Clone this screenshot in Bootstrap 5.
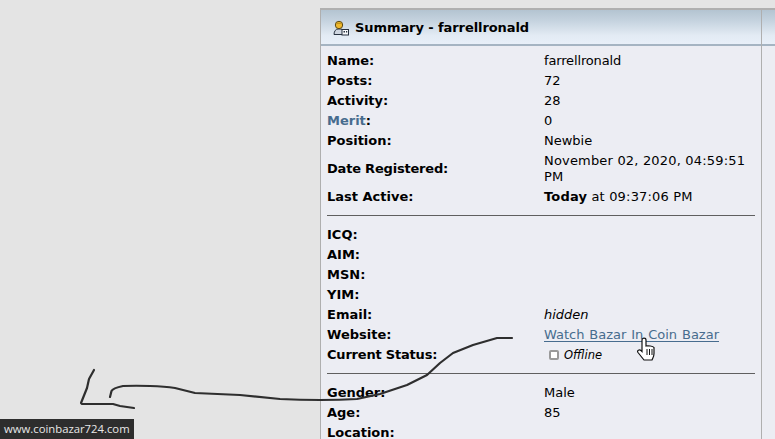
<!DOCTYPE html>
<html lang="en">
<head>
<meta charset="utf-8">
<title>Summary</title>
<link href="https://cdn.jsdelivr.net/npm/bootstrap@5.3.0/dist/css/bootstrap.min.css" rel="stylesheet">
<style>
html,body{height:439px;overflow:hidden}
body{background:#e4e4e4;font-family:"DejaVu Sans",Verdana,sans-serif;font-size:13px;line-height:16px;color:#000;position:relative}
.page-wrap{padding:8px 0 0 320px}
.pane{border-top:2px solid #afafaf;border-left:1px solid #afafaf;background:#ecedf3;height:431px}
.pane-main{width:441px;border-right:1px solid #afafaf;flex:none}
.pane-side{flex:1 1 auto}
.cap{height:34px;background:linear-gradient(#b4c4d1 0%,#c4d2de 30%,#e3ebf4 75%,#e8eff8 100%);border-bottom:2px solid #a5b4c2;box-sizing:content-box}
.cap-title{font-weight:700;padding:1px 0 0 12px;height:34px;letter-spacing:-.08px}
.cap-title svg{margin-right:6px}
.info{padding:5px 6px 0 6px}
.rw{min-height:20px;padding:2px 0}
.k{width:217px;flex:none;font-weight:700}
.k-tight{letter-spacing:-.2px}
.v{flex:1 1 auto}
.stamp{letter-spacing:.18px}
.uname{letter-spacing:-.15px}
.merit{color:#476c8e;font-weight:700}
.sep{border:0;border-top:1px solid #5f5f5f;opacity:1;margin:8px 0 9px}
.site{color:#476c8e;text-decoration:underline;text-underline-offset:2px;word-spacing:.75px}
.stat{padding-left:5px;font-size:11.5px;font-style:italic}
.box{width:10px;height:10px;border:2px solid #9a9a9a;border-radius:2px;background:#fff;margin-right:5px}
.scribble{position:absolute;left:0;top:0;pointer-events:none}
.hand{position:absolute;left:637px;top:337px}
.status-tip{position:absolute;left:0;bottom:0;height:20px;width:134px;background:#2d2d2d;color:#e8e8e8;font-family:"Open Sans","Noto Sans",sans-serif;font-size:11.3px;line-height:20px;padding-left:4px;white-space:nowrap}
</style>
</head>
<body>
<div class="page-wrap">
  <div class="d-flex pane">
    <div class="pane-main">
      <div class="cap">
        <div class="cap-title d-flex align-items-center">
          <svg width="16" height="16" viewBox="0 0 16 16"><path d="M1 14.500c0-3.500 2-5.500 4-5.500h2c2 0 3 1 3 2v3.500z" fill="#cfd6e0" stroke="#27313f"/><circle cx="6" cy="5" r="3.700" fill="#f0b92e" stroke="#5c4a18"/><path d="M3 4.500c1-2.500 5-2.500 6 0-2-1-4-1-6 0z" fill="#b98d18"/><rect x="9" y="9.500" width="6.500" height="5.500" fill="#f8fafc" stroke="#27313f"/><rect x="10.500" y="11" width="1.500" height="1.500" fill="#27313f"/><rect x="13" y="11" width="1.200" height="1.500" fill="#27313f"/></svg>
          <span>Summary - farrellronald</span>
        </div>
      </div>
      <div class="info">
        <div class="rw d-flex"><div class="k">Name:</div><div class="v uname">farrellronald</div></div>
        <div class="rw d-flex"><div class="k">Posts:</div><div class="v">72</div></div>
        <div class="rw d-flex"><div class="k">Activity:</div><div class="v">28</div></div>
        <div class="rw d-flex"><div class="k"><span class="merit">Merit</span>:</div><div class="v">0</div></div>
        <div class="rw d-flex"><div class="k">Position:</div><div class="v">Newbie</div></div>
        <div class="rw d-flex align-items-center"><div class="k k-tight">Date Registered:</div><div class="v stamp">November 02, 2020, 04:59:51 PM</div></div>
        <div class="rw d-flex"><div class="k">Last Active:</div><div class="v stamp"><b>Today</b> at 09:37:06 PM</div></div>
        <hr class="sep">
        <div class="rw d-flex"><div class="k">ICQ:</div><div class="v"></div></div>
        <div class="rw d-flex"><div class="k">AIM:</div><div class="v"></div></div>
        <div class="rw d-flex"><div class="k">MSN:</div><div class="v"></div></div>
        <div class="rw d-flex"><div class="k">YIM:</div><div class="v"></div></div>
        <div class="rw d-flex"><div class="k">Email:</div><div class="v"><i>hidden</i></div></div>
        <div class="rw d-flex"><div class="k">Website:</div><div class="v"><span class="site">Watch Bazar In Coin Bazar</span></div></div>
        <div class="rw d-flex"><div class="k k-tight">Current Status:</div><div class="v"><div class="stat d-flex align-items-center"><span class="box"></span>Offline</div></div></div>
        <hr class="sep">
        <div class="rw d-flex"><div class="k">Gender:</div><div class="v">Male</div></div>
        <div class="rw d-flex"><div class="k">Age:</div><div class="v">85</div></div>
        <div class="rw d-flex"><div class="k">Location:</div><div class="v"></div></div>
      </div>
    </div>
    <div class="pane-side"><div class="cap"></div></div>
  </div>
</div>
<svg class="scribble" width="775" height="439" viewBox="0 0 775 439" fill="none" stroke="#2e2e2e" stroke-width="2.200" stroke-linecap="round" stroke-linejoin="round">
  <path d="M94 370L89 379L87 388L81 403L82 404L113 404L120 406L134 408"/>
  <path d="M110 397L111.500 391Q113 388 123 386Q136 385.500 150 386Q165 386.500 175 388L195 393L240 395L280 399Q300 400 320 400Q340 400 357 399L380 394L407 385L427 375L440 363L453 353L473 345L497 338L512 338"/>
</svg>
<svg class="hand" width="18" height="25" viewBox="0 0 18 25"><path d="M5 3c0-2.500 4-2.500 4 0v6c2-.5 7 0 8 1.500v6c0 3-1 4-2 6.500H7L1 15.500c-1.500-2 1.500-3.500 3-2l1 1z" fill="#fff" stroke="#111" stroke-width="1.200"/><path d="M10 12v6M12.500 12v6M15 12v6" stroke="#111"/></svg>
<div class="status-tip">www.coinbazar724.com</div>
<script src="https://cdn.jsdelivr.net/npm/bootstrap@5.3.0/dist/js/bootstrap.bundle.min.js"></script>
</body>
</html>
